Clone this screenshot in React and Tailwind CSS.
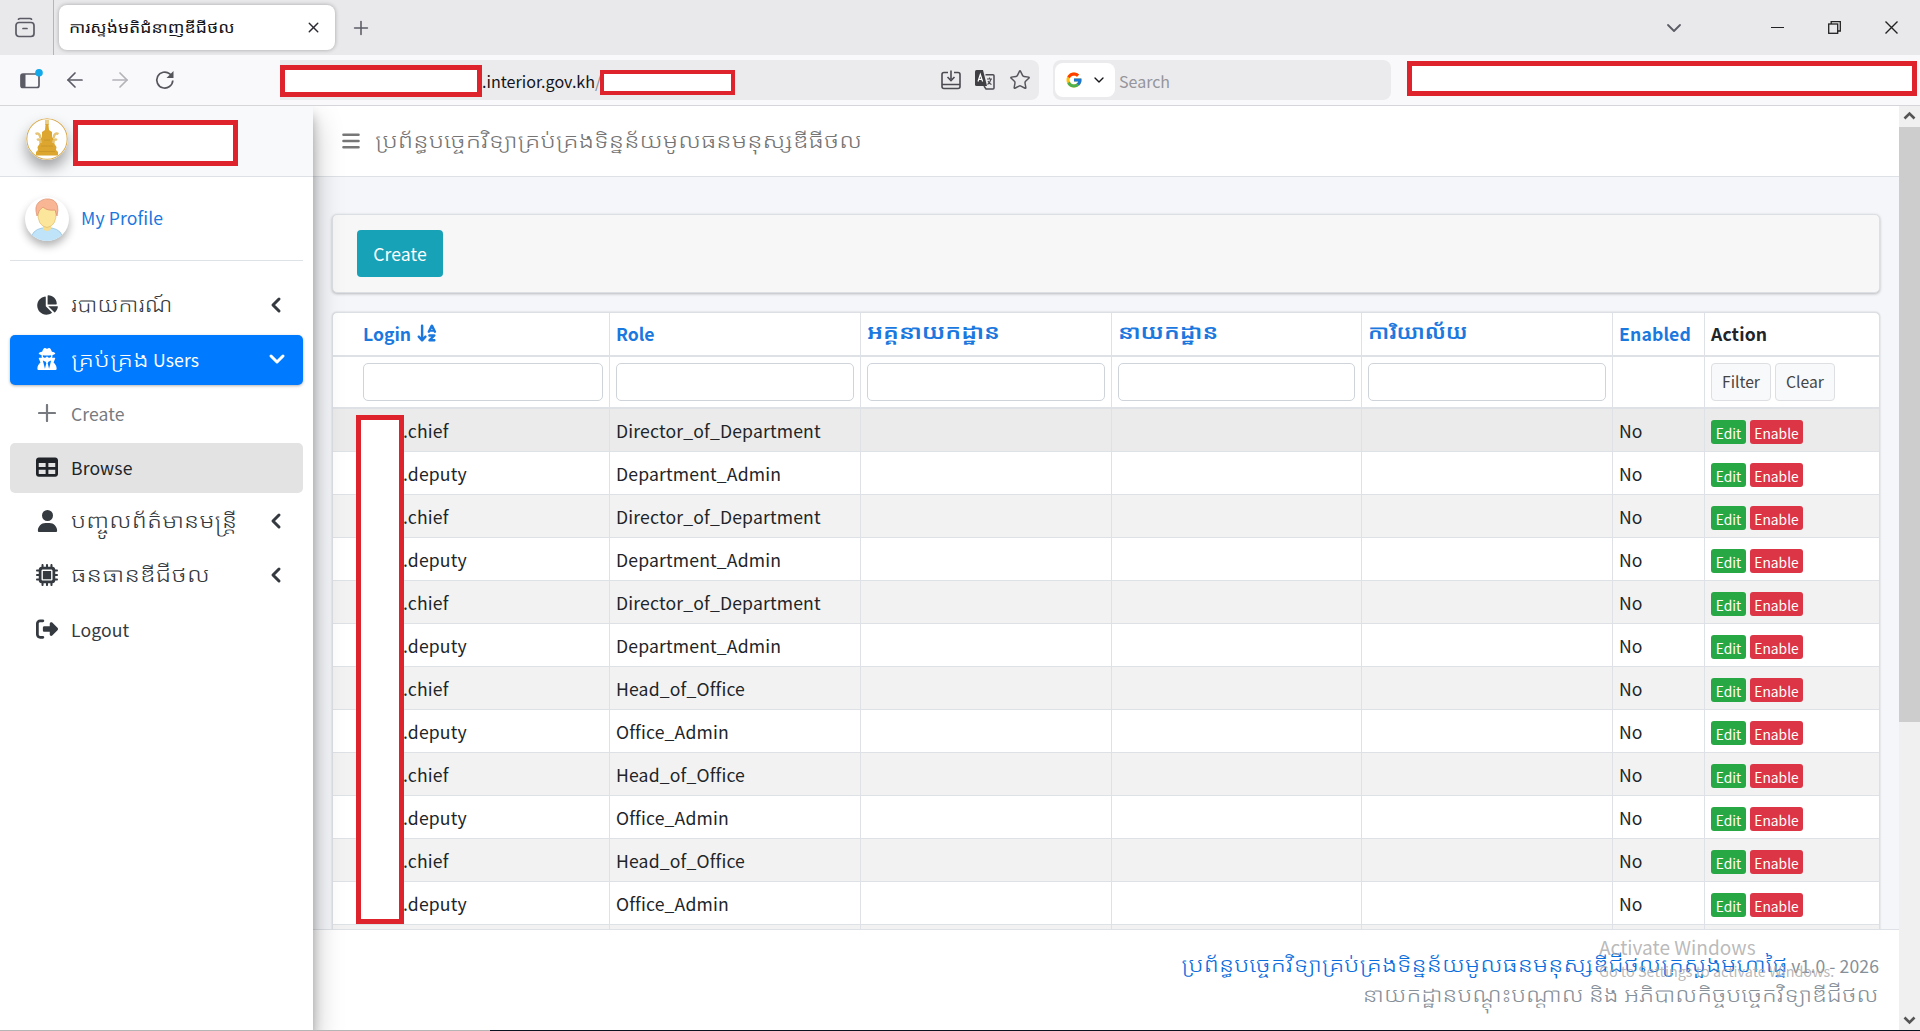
import React from "react";
import {
  FaChartPie,
  FaUserSecret,
  FaTable,
  FaUser,
  FaMicrochip,
  FaArrowDownAZ,
  FaRightFromBracket,
} from "react-icons/fa6";
import { FcGoogle } from "react-icons/fc";
import { Star, X, Plus, ArrowLeft, ArrowRight, ChevronDown, ChevronLeft } from "lucide-react";

const rows = [
  { login: ".chief", role: "Director_of_Department" },
  { login: ".deputy", role: "Department_Admin" },
  { login: ".chief", role: "Director_of_Department" },
  { login: ".deputy", role: "Department_Admin" },
  { login: ".chief", role: "Director_of_Department" },
  { login: ".deputy", role: "Department_Admin" },
  { login: ".chief", role: "Head_of_Office" },
  { login: ".deputy", role: "Office_Admin" },
  { login: ".chief", role: "Head_of_Office" },
  { login: ".deputy", role: "Office_Admin" },
  { login: ".chief", role: "Head_of_Office" },
  { login: ".deputy", role: "Office_Admin" },
];

const GRID = "grid grid-cols-[277px_251px_251px_250px_251px_92px_1fr]";

// Khmer text, stretched to the wide letter shapes of the site's font
const Khmer = ({ children, className = "" }) => (
  <span className={`inline-block origin-left whitespace-nowrap text-[19.5px] leading-none ${className}`}>{children}</span>
);

const ArchiveIcon = () => (
  <svg className="w-[22px] h-[22px]" viewBox="0 0 22 22" fill="none" stroke="#5b5b66" strokeWidth="1.7" strokeLinecap="round">
    <rect x="2" y="5.5" width="18" height="14" rx="3" />
    <path d="M4.5 2.2Q5 1.5 6 1.5H16Q17 1.5 17.5 2.2M9 11.5H13" />
  </svg>
);

const SidebarIcon = () => (
  <svg className="w-[24px] h-[22px]" viewBox="0 0 24 22" fill="none">
    <rect x="2" y="5" width="18" height="13.5" rx="2" stroke="#5b5b66" strokeWidth="1.7" />
    <path d="M2 5H6.5V18.5H2Z" fill="#5b5b66" />
    <circle cx="20" cy="3.8" r="3.8" fill="#12a8ea" />
  </svg>
);

const ReloadIcon = () => (
  <svg className="w-5 h-5" viewBox="0 0 20 20" fill="none" stroke="#55555c" strokeWidth="1.7">
    <path d="M17.8 10.5A8 8 0 1 1 14.8 3.8L17 6" />
    <path d="M18.5 1V8H11.5Z" fill="#55555c" stroke="none" />
  </svg>
);

const InstallIcon = () => (
  <svg className="w-5 h-5" viewBox="0 0 20 20" fill="none" stroke="#4b4b52" strokeWidth="1.6">
    <path d="M7 2.5H3Q1 2.5 1 4.5V16.5Q1 18.5 3 18.5H17Q19 18.5 19 16.5V4.5Q19 2.5 17 2.5H13M1 14.5H19" />
    <path d="M10 0.5V9M6.5 7L10 10.5L13.5 7" />
  </svg>
);

const TranslateIcon = () => (
  <svg className="w-5 h-5" viewBox="0 0 20 20" fill="none">
    <path d="M1.5 0H8L12 16H1.5Q0 16 0 14.5V1.5Q0 0 1.5 0Z" fill="#3f3f44" />
    <path d="M3 11.5L5.3 4.5L7.6 11.5M3.8 9.3H6.9" stroke="#fff" strokeWidth="1.2" />
    <path d="M10.5 4.8H18Q19 4.8 19 5.8V18Q19 19 18 19H11L9 16" stroke="#4b4b52" strokeWidth="1.5" />
    <path d="M12 9H17M14.5 7.5V9M16 9Q15 13 12.5 14.5M13 11Q14 13.5 16.5 14.5" stroke="#4b4b52" strokeWidth="1.1" />
  </svg>
);

const MenuBars = () => (
  <svg className="w-[18px] h-4" viewBox="0 0 18 16" stroke="#777" strokeWidth="2.6" strokeLinecap="round">
    <path d="M1.5 1.8H16.5M1.5 8H16.5M1.5 14.2H16.5" />
  </svg>
);

const Emblem = () => (
  <svg className="w-[42px] h-[42px] rounded-full shadow-[0_8px_14px_rgba(0,0,0,0.35)]" viewBox="0 0 42 42">
    <circle cx="21" cy="21" r="20.2" fill="#fff" stroke="#d9ad52" strokeWidth="1.1" />
    <path d="M19 2H23V7H19Z" fill="#e9cd8a" />
    <path d="M19.6 6H22.4L23 12L26 14V19L28 21L28.5 26L30.5 29L30 32L32 34V37.5H10V34L12 32L11.5 29L13.5 26L14 21L16 19V14L19 12Z" fill="#dca62f" />
    <path d="M9.5 16Q13.5 14 14.5 20M32.5 16Q28.5 14 27.5 20M11 22Q14 20 15 25M31 22Q28 20 27 25" fill="none" stroke="#e6c476" strokeWidth="2.4" />
    <path d="M15 28H27M13 33.5H29M18 22H24" stroke="#c8952a" strokeWidth="0.8" />
  </svg>
);

const Avatar = () => (
  <svg className="w-11 h-11 rounded-full bg-white shadow-[0_5px_9px_rgba(0,0,0,0.3)]" viewBox="0 0 44 44">
    <path d="M6 42Q7 33 17 31H27Q37 33 38 42Q22 48 6 42Z" fill="#bfe3f8" stroke="#8bbfdf" strokeWidth="0.7" />
    <path d="M18 27H26V32Q22 36 18 32Z" fill="#f7dd8c" />
    <path d="M13 14Q13 8 22 8T31 14Q32 29 22 30.5Q12 29 13 14Z" fill="#fbe69b" stroke="#dcb768" strokeWidth="0.6" />
    <path d="M12 19Q9 9 14 5Q20 0 28 3Q35 7 32 19L30 13Q22 14 18 10Q14 12 12 19Z" fill="#f9b695" stroke="#dd8d6c" strokeWidth="0.7" />
  </svg>
);

const MenuItem = ({ icon, label, arrow, className = "text-[#343a40]" }) => (
  <div className={`flex items-center h-[50px] rounded-[5px] pl-[26px] pr-[18px] ${className}`}>
    <span className="w-[22px] flex justify-center">{icon}</span>
    <span className="ml-[13px] flex-1 flex items-center whitespace-nowrap text-[17.6px] tracking-[0.1px]">{label}</span>
    {arrow}
  </div>
);

const arrowLeft = <ChevronLeft className="w-[24px] h-[24px] -mr-[3px] mb-[3px]" strokeWidth={3} />;

const BrowserChrome = () => (
  <div className="shrink-0">
    {/* TAB BAR */}
    <div className="h-[55px] bg-[#e9e9eb] flex items-center">
      <div className="w-[54px] h-full border-r border-[#b5b5b9] flex items-center justify-center pr-1">
        <ArchiveIcon />
      </div>
      <div className="ml-[5px] w-[276px] h-[45px] bg-white rounded-lg shadow-[0_0_4px_rgba(0,0,0,0.3)] flex items-center justify-between pl-[10px] pr-[13px]">
        <span className="inline-block origin-left scale-x-[1.175] mb-[2px] text-[15px] leading-none text-[#15141a] whitespace-nowrap">
          ការស្ទង់មតិជំនាញឌីជីថល
        </span>
        <X className="w-[17px] h-[17px] text-[#2b2a33]" strokeWidth={2} />
      </div>
      <Plus className="ml-[15px] w-[22px] h-[22px] text-[#5b5b66]" strokeWidth={1.7} />
      <div className="ml-auto flex items-center">
        <ChevronDown className="w-6 h-6 text-[#5b5b66] mr-[85px]" strokeWidth={1.8} />
        <div className="w-[13px] h-[1.5px] bg-[#222] mr-[44px]" />
        <svg className="w-[13px] h-[13px] mr-[43px]" viewBox="0 0 13 13" fill="none" stroke="#222" strokeWidth="1.3">
          <rect x="0.7" y="3" width="9" height="9.3" />
          <path d="M3.2 3V0.7H12.3V10H9.7" />
        </svg>
        <svg className="w-[15px] h-[15px] mr-[21px]" viewBox="0 0 15 15" stroke="#222" strokeWidth="1.4">
          <path d="M1.5 1.5L13.5 13.5M13.5 1.5L1.5 13.5" />
        </svg>
      </div>
    </div>

    {/* TOOLBAR */}
    <div className="h-[51px] bg-[#f9f9fb] border-b border-[#d6d6da] flex items-center">
      <div className="flex items-center pl-[19px] w-[280px]">
        <SidebarIcon />
        <ArrowLeft className="ml-[20px] w-[24px] h-[24px] text-[#5b5b66]" strokeWidth={1.7} />
        <ArrowRight className="ml-[21px] w-[24px] h-[24px] text-[#b3b3b8]" strokeWidth={1.7} />
        <span className="ml-[23px]"><ReloadIcon /></span>
      </div>
      <div className="w-[759px] h-10 bg-[#ebebed] rounded-r-lg flex items-center pr-2">
        <div className="w-[202px] h-8 mt-px bg-white border-[5px] border-[#df232c]" />
        <div className="w-[118px] pt-[2px] text-[16.1px] text-[#15141a] whitespace-nowrap">
          .interior.gov.kh<span className="text-[#8a8a92]">/</span>
        </div>
        <div className="w-[135px] h-[25px] mt-[5px] bg-white border-4 border-[#df232c]" />
        <div className="ml-auto flex items-center gap-[14px]">
          <InstallIcon />
          <TranslateIcon />
          <Star className="w-[22px] h-[22px] text-[#55555c]" strokeWidth={1.6} />
        </div>
      </div>
      <div className="ml-[14px] w-[338px] h-10 bg-[#ebebed] rounded-lg flex items-center pl-[2px]">
        <div className="w-[60px] h-[34px] bg-white rounded-lg flex items-center pl-[10px]">
          <FcGoogle className="w-[18px] h-[18px]" />
          <ChevronDown className="ml-[8px] w-4 h-4 text-[#15141a]" strokeWidth={2} />
        </div>
        <span className="ml-[4px] pt-[2px] text-[16px] text-[#95959b]">Search</span>
      </div>
      <div className="ml-4 mb-[4px] w-[510px] h-[35px] bg-white border-[5px] border-[#df232c]" />
    </div>
  </div>
);

const Sidebar = () => (
  <aside className="relative z-10 w-[313px] shrink-0 bg-white shadow-[0_14px_28px_rgba(0,0,0,0.28),0_10px_10px_rgba(0,0,0,0.24)]">
    <div className="h-[71px] bg-[#f8f9fb] border-b border-[#dee2e6] flex items-start pl-[26px]">
      <div className="mt-[12px]"><Emblem /></div>
      <div className="ml-[5px] mt-[14px] w-[165px] h-[46px] bg-white border-[5px] border-[#df232c]" />
    </div>
    <div className="px-[10px]">
      <div className="h-[84px] border-b border-[#dee2e6] flex items-center pl-[15px] gap-3">
        <Avatar />
        <span className="text-[17.6px] tracking-[0.1px] text-[#1b78de]">My Profile</span>
      </div>
      <nav className="mt-5 flex flex-col gap-1">
        <MenuItem icon={<FaChartPie className="w-[22px] h-[22px] mb-[3px]" />} label={<Khmer className="scale-x-[1.16] font-light mb-[5px]">របាយការណ៍</Khmer>} arrow={arrowLeft} />
        <MenuItem
          className="bg-[#007bff] text-white shadow-[0_1px_3px_rgba(0,0,0,0.3)]"
          icon={<FaUserSecret className="w-[22px] h-[22px] mb-[2px]" />}
          label={
            <>
              <Khmer className="w-[82px] mb-[3px]"><span className="inline-block origin-left scale-x-[1.3] font-light">គ្រប់គ្រង</span></Khmer>
              <span>Users</span>
            </>
          }
          arrow={<ChevronDown className="w-[24px] h-[24px] -mr-[4px] mb-[2px]" strokeWidth={3} />}
        />
        <MenuItem
          className="text-[#777b80]"
          icon={
            <svg className="w-[18px] h-[18px] mb-[3px]" viewBox="0 0 18 18" stroke="currentColor" strokeWidth="2.2" strokeLinecap="round">
              <path d="M9 1V17M1 9H17" />
            </svg>
          }
          label="Create"
        />
        <MenuItem className="bg-[#e3e3e4] text-[#212529]" icon={<FaTable className="w-[22px] h-[22px] mb-[2px]" />} label="Browse" />
        <MenuItem icon={<FaUser className="w-[21px] h-[22px] mb-[3px]" />} label={<Khmer className="scale-x-[1.26] font-light mb-[5px]">បញ្ចូលព័ត៌មានមន្ត្រី</Khmer>} arrow={arrowLeft} />
        <MenuItem icon={<FaMicrochip className="w-[22px] h-[22px] mb-[3px]" />} label={<Khmer className="scale-x-[1.29] font-light mb-[5px]">ធនធានឌីជីថល</Khmer>} arrow={arrowLeft} />
        <MenuItem icon={<FaRightFromBracket className="w-[22px] h-[22px] mb-[3px]" />} label="Logout" />
      </nav>
    </div>
  </aside>
);

const Cell = ({ children, className = "pl-[6px]" }) => (
  <div className={`border-r border-[#dee2e6] pr-[6px] flex items-center ${className}`}>{children}</div>
);

const FilterInput = () => <input type="text" className="w-full h-[38px] bg-white border border-[#ced4da] rounded-[5px]" />;

const UsersTable = () => (
  <div className="relative mx-[19px] mt-[19px] bg-white border border-[#dcdfe3] rounded-t-[5px] shadow-[0_0_2px_rgba(0,0,0,0.2)] text-[17.6px] text-[#212529]">
    <div className={`${GRID} h-[44px] border-b-2 border-[#dee2e6] font-bold text-[#1b78de] whitespace-nowrap`}>
      <Cell className="pl-[30px]">
        Login <FaArrowDownAZ className="ml-[5px] mb-[2px] w-[22px] h-[22px]" />
      </Cell>
      <Cell>Role</Cell>
      <Cell><Khmer className="scale-x-[1.23] mb-[6px] font-semibold">អគ្គនាយកដ្ឋាន</Khmer></Cell>
      <Cell><Khmer className="scale-x-[1.22] mb-[6px] font-semibold">នាយកដ្ឋាន</Khmer></Cell>
      <Cell><Khmer className="scale-x-[1.14] mb-[6px] font-semibold">ការិយាល័យ</Khmer></Cell>
      <Cell><span className="tracking-[0.14px]">Enabled</span></Cell>
      <div className="pl-[6px] flex items-center text-[#212529] tracking-[0.14px]">Action</div>
    </div>
    <div className={`${GRID} h-[52px] border-b-2 border-[#dee2e6]`}>
      <Cell className="pl-[30px]"><FilterInput /></Cell>
      <Cell><FilterInput /></Cell>
      <Cell><FilterInput /></Cell>
      <Cell><FilterInput /></Cell>
      <Cell><FilterInput /></Cell>
      <Cell />
      <div className="pl-[6px] flex items-center gap-1 text-[15.7px] text-[#444]">
        <button className="w-[60px] h-[38px] bg-[#f8f9fa] border border-[#dddfe2] rounded-[4px]">Filter</button>
        <button className="w-[60px] h-[38px] bg-[#f8f9fa] border border-[#dddfe2] rounded-[4px]">Clear</button>
      </div>
    </div>
    {rows.map((row, i) => (
      <div key={i} className={`${GRID} h-[43px] border-b border-[#dee2e6] ${i === 0 ? "bg-[#ebebeb]" : i % 2 === 0 ? "bg-[#f2f2f2]" : "bg-white"}`}>
        <Cell className="pl-[70px] pt-[2px] tracking-[0.16px]">{row.login}</Cell>
        <Cell className="pl-[6px] pt-[2px] tracking-[0.16px]">{row.role}</Cell>
        <Cell />
        <Cell />
        <Cell />
        <Cell className="pl-[6px] pt-[2px]">No</Cell>
        <div className="pl-[6px] pt-[3px] flex items-center gap-1 text-[13.8px] text-white">
          <span className="w-[35px] h-6 leading-[26px] text-center bg-[#28a745] rounded-[3px]">Edit</span>
          <span className="w-[53px] h-6 leading-[26px] text-center bg-[#dc3545] rounded-[3px]">Enable</span>
        </div>
      </div>
    ))}
    <div className={`${GRID} h-[43px] bg-[#f2f2f2]`}>
      <Cell /><Cell /><Cell /><Cell /><Cell /><Cell />
    </div>
    <div className="absolute left-[23px] top-[102px] w-12 h-[509px] bg-white border-[5px] border-[#df232c]" />
  </div>
);

const Scrollbar = () => (
  <div className="w-[21px] shrink-0 bg-[#f0f0f0] flex flex-col">
    <svg className="w-[21px] h-[21px]" viewBox="0 0 21 21" fill="none" stroke="#555" strokeWidth="2.6">
      <path d="M5.5 12.5L10.5 7.5L15.5 12.5" />
    </svg>
    <div className="h-[595px] bg-[#cdcdcd]" />
    <svg className="mt-auto w-[21px] h-[21px]" viewBox="0 0 21 21" fill="none" stroke="#555" strokeWidth="2.6">
      <path d="M5.5 8.5L10.5 13.5L15.5 8.5" />
    </svg>
  </div>
);

export default function App() {
  return (
    <div className="w-[1920px] h-[1031px] overflow-hidden flex flex-col bg-white font-['Noto_Sans_CJK_JP','Noto_Sans_Khmer','Khmer_OS',sans-serif] leading-normal">
      <BrowserChrome />
      <div className="flex h-[924px] overflow-hidden">
        <Sidebar />
        <main className="flex-1 min-w-0 flex flex-col bg-[#f4f6f9]">
          <header className="h-[71px] shrink-0 bg-white border-b border-[#dee2e6] flex items-center pl-[29px]">
            <MenuBars />
            <Khmer className="ml-[15px] mb-[3px] scale-x-[1.285] font-light text-[#757575]">
              ប្រព័ន្ធបច្ចេកវិទ្យាគ្រប់គ្រងទិន្នន័យមូលធនមនុស្សឌីធីថល
            </Khmer>
          </header>
          <div className="flex-1 min-h-0 overflow-hidden pt-[37px]">
            <div className="mx-[19px] h-[79px] bg-[#f7f7f7] border border-[#dcdfe3] rounded-[5px] shadow-[0_1px_3px_rgba(0,0,0,0.25)] flex items-center pl-6">
              <button className="w-[86px] h-[47px] pt-px bg-[#17a2b8] rounded-[4px] text-white text-[17.6px] tracking-[0.1px]">Create</button>
            </div>
            <UsersTable />
          </div>
          <footer className="relative h-[101px] shrink-0 bg-white border-t border-[#dee2e6] pr-[20px] pt-[20px] text-[17.6px] text-[#869099] whitespace-nowrap">
            <div className="h-[29px] flex items-center justify-end">
              <Khmer className="origin-right scale-x-[1.267] mb-[2px] font-light text-[#0a6ddd]">
                ប្រព័ន្ធបច្ចេកវិទ្យាគ្រប់គ្រងទិន្នន័យមូលធនមនុស្សឌីជីថលក្រសួងមហាផ្ទៃ
              </Khmer>
              <span className="ml-[4px] pt-[3px] tracking-[0.1px]">v1.0 - 2026</span>
            </div>
            <div className="h-[29px] flex items-center justify-end">
              <Khmer className="origin-right scale-x-[1.238] font-light">នាយកដ្ឋានបណ្ដុះបណ្ដាល និង អភិបាលកិច្ចបច្ចេកវិទ្យាឌីជីថល</Khmer>
            </div>
            <div className="absolute left-[1286px] top-[3px] text-left text-[#a8a8a8]/80">
              <div className="text-[19.1px] leading-[28px]">Activate Windows</div>
              <div className="text-[14.4px] leading-[20px]">Go to Settings to activate Windows.</div>
            </div>
          </footer>
        </main>
        <Scrollbar />
      </div>
      <div className="h-px flex">
        <div className="w-[490px] bg-[#b5b5b5]" />
        <div className="flex-1 bg-[#0a1420]" />
      </div>
    </div>
  );
}
